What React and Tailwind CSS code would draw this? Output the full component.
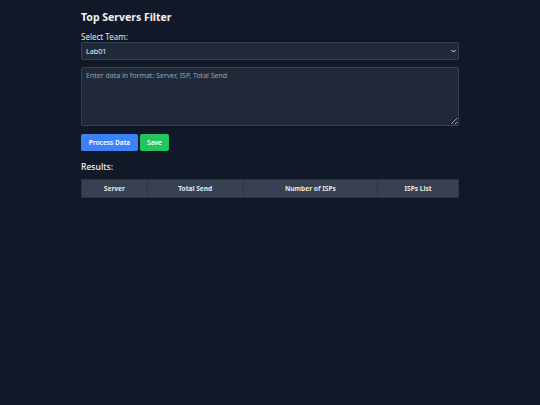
import React, { useState } from 'react';

const teams = ['Lab01', 'Lab02', 'Lab03'];

const columns = [
  { label: 'Server', width: 'w-[66px]' },
  { label: 'Total Send', width: 'w-[96px]' },
  { label: 'Number of ISPs', width: 'w-[135px]' },
  { label: 'ISPs List', width: 'w-[81px]' },
];

export default function App() {
  const [team, setTeam] = useState('Lab01');
  const [data, setData] = useState('');

  return (
    <div className="min-h-[405px] bg-[#111827] text-[#f3f4f6] font-['Noto_Sans',sans-serif]">
      <div className="mx-auto w-[378px] pt-[10px]">
        <h1 className="text-[10.5px] font-bold leading-[15px] mb-[7px]">Top Servers Filter</h1>

        <label className="block text-[8px] leading-[10px] text-[#e5e7eb]">Select Team:</label>
        <div className="relative mb-[7px]">
          <select
            value={team}
            onChange={(e) => setTeam(e.target.value)}
            className="block appearance-none w-full h-[18px] rounded-[2px] border border-[#374151] bg-[#1f2937] px-[4px] text-[7.2px] text-[#f3f4f6] outline-none"
          >
            {teams.map((t) => (
              <option key={t}>{t}</option>
            ))}
          </select>
          <svg className="absolute right-[3px] top-[7px] w-[5px] h-[4px] pointer-events-none" viewBox="0 0 10 8">
            <path d="M1 2 L5 6 L9 2" fill="none" stroke="#e5e7eb" strokeWidth="2" />
          </svg>
        </div>

        <textarea
          value={data}
          onChange={(e) => setData(e.target.value)}
          placeholder="Enter data in format: Server, ISP, Total Send"
          className="block w-full h-[59px] rounded-[2px] border border-[#374151] bg-[#1f2937] px-[4px] py-[3px] text-[7px] leading-[10px] text-[#f3f4f6] placeholder:text-[#9ca3af] outline-none"
        />

        <div className="flex gap-[2px] mt-[8px] mb-[10px]">
          <button className="h-[17px] w-[57px] rounded-[2px] bg-[#3b82f6] text-[6.6px] font-semibold text-white">
            Process Data
          </button>
          <button className="h-[17px] w-[29px] rounded-[2px] bg-[#22c55e] text-[6.6px] font-semibold text-white">
            Save
          </button>
        </div>

        <h2 className="text-[8.6px] font-medium leading-[12px] mb-[6px]">Results:</h2>

        <table className="w-full border-collapse">
          <thead>
            <tr className="bg-[#374151]">
              {columns.map((c) => (
                <th
                  key={c.label}
                  className={`${c.width} h-[18px] border border-[#2b3444] text-[6.6px] font-bold text-[#e5e7eb]`}
                >
                  {c.label}
                </th>
              ))}
            </tr>
          </thead>
          <tbody />
        </table>
      </div>
    </div>
  );
}
